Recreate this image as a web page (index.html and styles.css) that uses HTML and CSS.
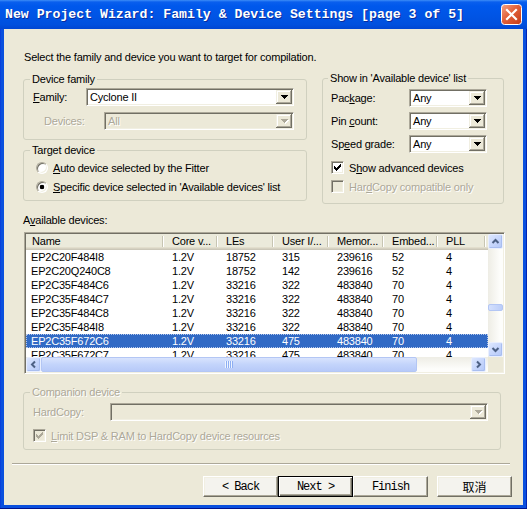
FILE: index.html
```html
<!DOCTYPE html>
<html>
<head>
<meta charset="utf-8">
<title>New Project Wizard</title>
<link rel="stylesheet" href="styles.css">
</head>
<body>
<div class="window">
  <div class="titlebar">
    <span class="title">New Project Wizard: Family &amp; Device Settings [page 3 of 5]</span>
    <svg class="close" width="21" height="21" viewBox="0 0 21 21">
      <defs>
        <linearGradient id="cg" x1="0" y1="0" x2="1" y2="1">
          <stop offset="0" stop-color="#F4A487"/>
          <stop offset="0.45" stop-color="#E2613A"/>
          <stop offset="1" stop-color="#C23A17"/>
        </linearGradient>
      </defs>
      <rect x="0.5" y="0.5" width="20" height="20" rx="3" fill="url(#cg)" stroke="#fff"/>
      <path d="M6 6L15 15M15 6L6 15" stroke="#fff" stroke-width="2.2" stroke-linecap="square"/>
    </svg>
  </div>
  <div class="client">
    <p class="intro">Select the family and device you want to target for compilation.</p>

    <div class="toprow">
      <div class="leftcol">
        <fieldset class="grp fam">
          <legend>Device family</legend>
          <div class="frow">
            <span class="lbl"><u>F</u>amily:</span>
            <div class="combo w208"><span class="val">Cyclone II</span><span class="ddbtn"><svg width="7" height="4" viewBox="0 0 7 4"><path d="M0 0h7v1H0zM1 1h5v1H1zM2 2h3v1H2zM3 3h1v1H3z" fill="#000"/></svg></span></div>
          </div>
          <div class="frow devrow">
            <span class="lbl dis">Devices:</span>
            <div class="combo w190 off"><span class="val dis">All</span><span class="ddbtn"><svg width="8" height="5" viewBox="0 0 8 5"><path d="M1 1h7v1H1zM2 2h5v1H2zM3 3h3v1H3zM4 4h1v1H4z" fill="#fff"/><path d="M0 0h7v1H0zM1 1h5v1H1zM2 2h3v1H2zM3 3h1v1H3z" fill="#ACA899"/></svg></span></div>
          </div>
        </fieldset>
        <fieldset class="grp tgt">
          <legend>Target device</legend>
          <div class="opt"><span class="radio"></span><span><u>A</u>uto device selected by the Fitter</span></div>
          <div class="opt"><span class="radio on"></span><span><u>S</u>pecific device selected in 'Available devices' list</span></div>
        </fieldset>
      </div>

      <fieldset class="grp show">
        <legend>Show in 'Available device' list</legend>
        <div class="srow">
          <span class="lbl">Pac<u>k</u>age:</span>
          <div class="combo w78"><span class="val">Any</span><span class="ddbtn"><svg width="7" height="4" viewBox="0 0 7 4"><path d="M0 0h7v1H0zM1 1h5v1H1zM2 2h3v1H2zM3 3h1v1H3z" fill="#000"/></svg></span></div>
        </div>
        <div class="srow">
          <span class="lbl">Pin <u>c</u>ount:</span>
          <div class="combo w78"><span class="val">Any</span><span class="ddbtn"><svg width="7" height="4" viewBox="0 0 7 4"><path d="M0 0h7v1H0zM1 1h5v1H1zM2 2h3v1H2zM3 3h1v1H3z" fill="#000"/></svg></span></div>
        </div>
        <div class="srow">
          <span class="lbl">Sp<u>e</u>ed grade:</span>
          <div class="combo w78"><span class="val">Any</span><span class="ddbtn"><svg width="7" height="4" viewBox="0 0 7 4"><path d="M0 0h7v1H0zM1 1h5v1H1zM2 2h3v1H2zM3 3h1v1H3z" fill="#000"/></svg></span></div>
        </div>
        <div class="chkrow first">
          <span class="cb"><svg width="7" height="7" viewBox="0 0 7 7"><path d="M6 0h1v3H6zM5 1h1v3H5zM4 2h1v3H4zM3 3h1v3H3zM2 4h1v3H2zM1 3h1v3H1zM0 2h1v3H0z" fill="#000"/></svg></span>
          <span>S<u>h</u>ow advanced devices</span>
        </div>
        <div class="chkrow">
          <span class="cb off"></span>
          <span class="dis">Har<u>d</u>Copy compatible only</span>
        </div>
      </fieldset>
    </div>

    <div class="avlabel">A<u>v</u>ailable devices:</div>

    <div class="list">
      <div class="lmain">
        <div class="lhead">
          <span class="hc">Name</span><span class="hc">Core v...</span><span class="hc">LEs</span><span class="hc">User I/...</span><span class="hc">Memor...</span><span class="hc">Embed...</span><span class="hc">PLL</span>
        </div>
        <div class="rows">
          <div class="row"><span>EP2C20F484I8</span><span>1.2V</span><span>18752</span><span>315</span><span>239616</span><span>52</span><span>4</span></div>
          <div class="row"><span>EP2C20Q240C8</span><span>1.2V</span><span>18752</span><span>142</span><span>239616</span><span>52</span><span>4</span></div>
          <div class="row"><span>EP2C35F484C6</span><span>1.2V</span><span>33216</span><span>322</span><span>483840</span><span>70</span><span>4</span></div>
          <div class="row"><span>EP2C35F484C7</span><span>1.2V</span><span>33216</span><span>322</span><span>483840</span><span>70</span><span>4</span></div>
          <div class="row"><span>EP2C35F484C8</span><span>1.2V</span><span>33216</span><span>322</span><span>483840</span><span>70</span><span>4</span></div>
          <div class="row"><span>EP2C35F484I8</span><span>1.2V</span><span>33216</span><span>322</span><span>483840</span><span>70</span><span>4</span></div>
          <div class="row sel"><span>EP2C35F672C6</span><span>1.2V</span><span>33216</span><span>475</span><span>483840</span><span>70</span><span>4</span></div>
          <div class="row"><span>EP2C35F672C7</span><span>1.2V</span><span>33216</span><span>475</span><span>483840</span><span>70</span><span>4</span></div>
        </div>
      </div>
      <div class="vscroll">
        <span class="sb"><svg width="13" height="13" viewBox="0 0 13 13"><polyline points="3.5,8 6.5,5 9.5,8" fill="none" stroke="#4D6185" stroke-width="2"/></svg></span>
        <div class="vtrack"><span class="vthumb"></span></div>
        <span class="sb"><svg width="13" height="13" viewBox="0 0 13 13"><polyline points="3.5,5 6.5,8 9.5,5" fill="none" stroke="#4D6185" stroke-width="2"/></svg></span>
      </div>
      <div class="hscroll">
        <span class="sb"><svg width="13" height="13" viewBox="0 0 13 13"><polyline points="8,3.5 5,6.5 8,9.5" fill="none" stroke="#4D6185" stroke-width="2"/></svg></span>
        <span class="hthumb"><span class="grip"></span></span>
        <span class="htrack"></span>
        <span class="sb"><svg width="13" height="13" viewBox="0 0 13 13"><polyline points="5,3.5 8,6.5 5,9.5" fill="none" stroke="#4D6185" stroke-width="2"/></svg></span>
      </div>
      <div class="corner"></div>
    </div>

    <fieldset class="grp comp">
      <legend class="dis">Companion device</legend>
      <div class="crow">
        <span class="lbl dis">HardCopy:</span>
        <div class="combo w378 off"><span class="val"></span><span class="ddbtn"><svg width="8" height="5" viewBox="0 0 8 5"><path d="M1 1h7v1H1zM2 2h5v1H2zM3 3h3v1H3zM4 4h1v1H4z" fill="#fff"/><path d="M0 0h7v1H0zM1 1h5v1H1zM2 2h3v1H2zM3 3h1v1H3z" fill="#ACA899"/></svg></span></div>
      </div>
      <div class="chkrow small">
        <span class="cb off"><svg width="7" height="7" viewBox="0 0 7 7"><path d="M6 0h1v3H6zM5 1h1v3H5zM4 2h1v3H4zM3 3h1v3H3zM2 4h1v3H2zM1 3h1v3H1zM0 2h1v3H0z" fill="#ACA899"/></svg></span>
        <span class="dis"><u>L</u>imit DSP &amp; RAM to HardCopy device resources</span>
      </div>
    </fieldset>

    <div class="sep"></div>

    <div class="buttons">
      <span class="btn">&lt; Back</span>
      <span class="btn def">Next &gt;</span>
      <span class="btn">Finish</span>
      <span class="btn cancel">取消</span>
    </div>
  </div>
</div>
</body>
</html>
```
FILE: styles.css
```css
* { box-sizing: border-box; }
html, body { margin: 0; padding: 0; }
body {
  width: 527px;
  height: 509px;
  overflow: hidden;
  background: #ffffff;
  font-family: "Liberation Sans", Arial, sans-serif;
  font-size: 11px;
  letter-spacing: -0.2px;
  color: #000;
}
u { text-decoration: underline; text-underline-offset: 1px; }

.window {
  width: 527px;
  height: 509px;
  display: flex;
  flex-direction: column;
  padding: 0 4px 4px 4px;
  background: linear-gradient(to right, #0831D9 0, #0A50DE 1px, #0A50DE 526px, #0024B4 526px);
  box-shadow: inset 0 -1px #00138C;
}

.titlebar {
  height: 29px;
  flex: none;
  margin: 0 -4px;
  padding: 0 5px;
  display: flex;
  align-items: center;
  justify-content: space-between;
  background: linear-gradient(#3D8DF7 0, #0A5FEE 2px, #0058EC 6px, #0055E6 50%, #0050DE 85%, #0046D2 100%);
}
.title {
  font-family: "Liberation Mono", "DejaVu Sans Mono", monospace;
  font-weight: bold;
  font-size: 13.2px;
  letter-spacing: 0;
  line-height: 16px;
  color: #fff;
  text-shadow: 1px 1px 0 #0A2C9C;
  white-space: nowrap;
}
.close { display: block; }

.client {
  flex: 1;
  background: #ECE9D8;
  padding: 22px 0 0 19px;
  display: flex;
  flex-direction: column;
}
.client > * { flex-shrink: 0; }

.intro { margin: 0 0 0 1px; line-height: 13px; white-space: nowrap; }

.toprow { display: flex; gap: 15px; margin-top: 8px; align-items: flex-start; }
.leftcol { width: 284px; display: flex; flex-direction: column; }

.grp {
  margin: 0;
  min-width: 0;
  border: 1px solid #D0D0BF;
  border-radius: 3px;
}
legend { padding: 0 2px; margin-left: -3px; line-height: 13px; white-space: nowrap; }

.dis { color: #ACA899; text-shadow: 1px 1px 0 #ffffff; }

.fam { margin-top: 1px; padding: 2px 12px 9px 9px; }
.frow { display: flex; align-items: center; height: 18px; }
.frow + .frow { margin-top: 6px; }
.fam .lbl { width: 53px; }
.devrow { padding-left: 11px; }
.devrow .lbl { width: 60px; }

.tgt { margin-top: 4px; padding: 1px 9px 4px 9px; }
.opt { display: flex; align-items: center; height: 19px; white-space: nowrap; }
.radio {
  width: 12px;
  height: 12px;
  margin: 0 5px 0 3px;
  flex: none;
  border-radius: 50%;
  border: 1px solid;
  border-color: #ACA899 #fff #fff #ACA899;
  background: #fff;
  box-shadow: inset 1px 1px 0 #716F64, inset -1px -1px 0 #F1EFE2;
}
.radio.on { background: radial-gradient(circle at 50% 50%, #000 0, #000 2px, #fff 2.6px); }

.combo {
  display: flex;
  height: 18px;
  padding: 1px;
  border: 1px solid;
  border-color: #ACA899 #fff #fff #ACA899;
  box-shadow: inset 1px 1px 0 #716F64, inset -1px -1px 0 #F1EFE2;
  background: #fff;
}
.combo.off { background: #ECE9D8; }
.w208 { width: 208px; }
.w190 { width: 190px; }
.w78 { width: 78px; }
.w378 { width: 378px; }
.val { flex: 1; padding-left: 2px; line-height: 14px; white-space: nowrap; overflow: hidden; }
.ddbtn {
  width: 16px;
  height: 14px;
  flex: none;
  display: flex;
  align-items: center;
  justify-content: center;
  background: #ECE9D8;
  box-shadow: inset -1px -1px 0 #716F64, inset 1px 1px 0 #F1EFE2, inset -2px -2px 0 #ACA899, inset 2px 2px 0 #fff;
}
.ddbtn svg { display: block; margin-left: 1px; }

.show { width: 182px; padding: 4px 16px 7px 8px; }
.srow { display: flex; align-items: center; height: 18px; }
.srow + .srow { margin-top: 5px; }
.show .lbl { width: 78px; white-space: nowrap; }
.chkrow { display: flex; align-items: center; height: 19px; white-space: nowrap; }
.chkrow.first { margin-top: 5px; }
.cb {
  width: 13px;
  height: 13px;
  flex: none;
  margin-right: 5px;
  display: flex;
  align-items: center;
  justify-content: center;
  border: 1px solid;
  border-color: #ACA899 #fff #fff #ACA899;
  box-shadow: inset 1px 1px 0 #716F64, inset -1px -1px 0 #F1EFE2;
  background: #fff;
}
.cb.off { background: #ECE9D8; }

.avlabel { margin-top: 10px; line-height: 13px; }

.list {
  margin: 5px 0 0 1px;
  width: 481px;
  height: 142px;
  border: 1px solid;
  border-color: #ACA899 #fff #fff #ACA899;
  box-shadow: inset 1px 1px 0 #716F64, inset -1px -1px 0 #F1EFE2;
  padding: 1px;
  background: #fff;
  display: grid;
  grid-template-columns: 462px 15px;
  grid-template-rows: 123px 15px;
}
.lmain { display: flex; flex-direction: column; overflow: hidden; }
.lhead, .row {
  display: grid;
  grid-template-columns: 140px 54px 56px 55px 55px 54px 48px;
}
.lhead {
  height: 16px;
  flex: none;
  background: #EBEADB;
  box-shadow: inset 0 -1px 0 #CBC7B8, inset 0 -2px 0 #D6D2C2, inset 0 -3px 0 #E2DECD;
}
.hc {
  line-height: 14px;
  padding-left: 6px;
  white-space: nowrap;
  overflow: hidden;
  background: linear-gradient(to right, #C7C5B2 0 1px, #fff 1px 2px) right 2px top 2px / 2px 11px no-repeat;
}
.rows { height: 107px; flex: none; overflow: hidden; }
.row { height: 14px; line-height: 14px; }
.row span { padding-left: 6px; white-space: nowrap; overflow: hidden; }
.row span:first-child { padding-left: 5px; }
.row.sel { background: #316AC5; color: #fff; outline: 1px dotted #B6C8EA; outline-offset: -1px; }

.vscroll {
  display: flex;
  flex-direction: column;
  background: linear-gradient(to right, #EEEDE5, #FDFDFB 80%);
}
.sb {
  width: 15px;
  height: 15px;
  flex: none;
  display: flex;
  align-items: center;
  justify-content: center;
  border: 1px solid #E9EFFE;
  border-radius: 2px;
  background: linear-gradient(135deg, #DDE7FE 0%, #C5D5FC 55%, #B4C8F7 100%);
  box-shadow: inset -1px -1px 0 #A9BEF0;
}
.sb svg { display: block; }
.vtrack { flex: 1; padding-top: 55px; }
.vthumb {
  display: block;
  height: 7px;
  border: 1px solid #B3C6F4;
  border-radius: 2px;
  background: linear-gradient(to right, #D4E0FD, #BBCDF9);
}
.hscroll {
  display: flex;
  background: linear-gradient(#EEEDE5, #FDFDFB 80%);
  padding-right: 2px;
}
.hthumb {
  width: 376px;
  flex: none;
  display: flex;
  align-items: center;
  justify-content: center;
  border: 1px solid #B3C6F4;
  border-radius: 2px;
  background: linear-gradient(#D8E3FD, #C3D4FB 50%, #B7CAF8);
}
.grip {
  width: 8px;
  height: 7px;
  background: repeating-linear-gradient(to right, #EEF4FE 0 1px, #8DAEF3 1px 2px);
}
.htrack { flex: 1; }
.corner { background: #ECE9D8; }

.comp { margin-top: 12px; width: 478px; padding: 4px 12px 7px 9px; }
.crow { display: flex; align-items: center; height: 18px; }
.crow .lbl { width: 77px; }
.chkrow.small { height: 13px; margin-top: 8px; }

.sep {
  margin: 13px 0 0 -11px;
  width: 498px;
  height: 2px;
  border-top: 1px solid #ACA899;
  border-bottom: 1px solid #fff;
}

.buttons { display: flex; margin: 11px 0 0 180px; }
.btn {
  width: 75px;
  height: 21px;
  display: flex;
  align-items: center;
  justify-content: center;
  font-family: "Liberation Mono", "DejaVu Sans Mono", monospace;
  font-size: 12px;
  letter-spacing: -1px;
  background: #F4F3EE;
  border: 1px solid;
  border-color: #fff #716F64 #716F64 #fff;
  box-shadow: inset -1px -1px 0 #ACA899, inset 1px 1px 0 #F1EFE2;
  white-space: pre;
}
.btn.def {
  border-color: #000;
  box-shadow: inset 1px 1px 0 #fff, inset -1px -1px 0 #716F64, inset -2px -2px 0 #ACA899;
}
.btn.cancel {
  margin-left: 9px;
  font-family: "Noto Sans CJK SC", sans-serif;
  letter-spacing: 0;
}
```
